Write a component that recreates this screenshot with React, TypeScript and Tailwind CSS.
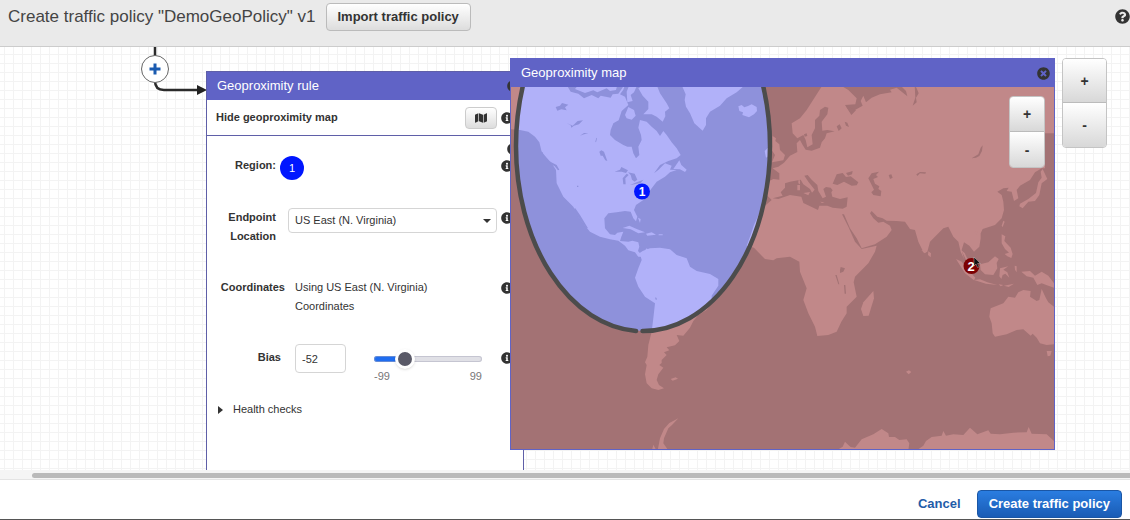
import { useState } from 'react'
import type { ReactNode } from 'react'
import { FaInfoCircle, FaMap, FaQuestionCircle, FaTimesCircle } from 'react-icons/fa'

const REGIONS = ['US East (N. Virginia)', 'US East (Ohio)', 'US West (Oregon)', 'Asia Pacific (Singapore)']

const AMERICAS = [
  // mainland north america
  'M-10 90H345L340 104 330 118 345 125 355 150 335 168 326 196 310 205 302 225 300 240 315 255 340 270 352 275 365 275 370 295 378 310 388 300 385 275 395 255 393 240 385 218 390 195 410 200 425 215 440 228 450 243 460 228 470 240 485 262 500 280 512 300 500 310 475 318 450 330 432 355 445 345 465 325 485 332 480 344 500 345 480 352 465 365 440 380 425 400 400 435 378 450 372 465 382 485 378 499 370 490 362 470 345 468 320 472 295 475 283 490 285 520 300 538 315 540 322 533 340 530 334 545 330 558 355 560 367 557 385 562 388 575 384 588 395 600 410 580 440 605 385 605 375 592 355 586 345 572 325 557 300 553 270 545 240 530 225 512 205 485 190 455 175 440 160 425 150 405 140 385 138 345 125 325 110 308 95 290 88 262 75 245 55 230 30 225 -10 222Z',
  // baffin and hudson islands
  'M385 100L400 90H440L450 115 470 145 478 160 465 170 466 184 458 200 440 185 425 178 400 178 415 162 415 140 398 122Z',
  'M345 180L355 156 372 165 377 182 365 194 350 190Z',
  'M358 90H382L372 112 362 120 368 138 352 142 350 110Z',
  // newfoundland, cuba, hispaniola
  'M490 342L508 316 514 330 530 344 525 351 510 343Z',
  'M338 519L358 512 380 522 405 532 385 535 362 523Z',
  'M408 536L425 532 438 539 412 542Z M446 538h12v3h-12Z M384 488l8 4-2 12Z',
  // greenland, iceland, ireland
  'M515 90L527 118 524 135 528 155 540 175 553 205 568 218 578 227 588 210 588 190 600 170 630 152 650 130 680 112 705 90Z',
  'M685 154L695 150 703 157 714 153 725 148 740 156 741 168 732 178 717 187 697 180 699 172 688 168Z',
  'M764 288L776 276 784 298 768 308Z',
  // south america
  'M380 600L398 588 420 580 450 578 480 583 500 600 530 610 540 635 560 648 600 657 625 672 625 692 605 722 605 742 590 765 565 780 550 798 540 818 520 842 500 840 508 858 495 871 470 877 478 886 462 892 470 900 455 915 455 924 448 930 460 938 445 958 440 975 447 990 462 1000 445 1005 425 1000 410 985 405 958 410 930 405 922 412 905 415 870 425 830 430 790 435 745 405 725 385 695 375 668 385 640 395 615 392 604Z',
  'M482 972L497 967 504 971 488 977Z',
  'M505 1090L478 1104 462 1122 450 1150 443 1186H475L460 1165 462 1150 475 1120 486 1110Z M426 1186l4-17 9 17Z',
]

// narrow inlets on the pacific coast
const PACIFIC_INLETS = 'M190 462l6-2 14 20 24 40-6-2-24-32Z M112 316l28 14 8 14-4 2-10-12-22-12Z M90 288l8 4 2 12-8-4Z'

const EASTERN = [
  // eurasia and africa, inland seas are painted on top
  'M98 340L115 335 132 323 150 302 172 291 170 265 180 255 188 270 197 284 215 287 240 278 245 262 255 250 260 235 284 229 262 225 247 227 245 200 262 178 265 158 255 155 240 165 238 182 225 195 225 220 215 240 218 268 202 277 197 255 190 240 172 250 158 235 155 205 180 190 200 165 235 110 248 90H300L325 105 350 130 346 148 315 150 325 165 335 178 345 165 368 152 362 138 370 122 378 142 395 128 420 118 455 112 450 104 470 98 502 124 498 108 480 90H942V235H915V340H905L885 352 870 375 840 392 830 405 835 430 822 438 815 410 800 408 806 398 790 400 772 410 785 420 790 440 792 465 785 490 765 510 735 520 728 522 722 535 722 550 718 575 702 590 688 572 672 562 665 585 672 612 662 590 655 560 640 545 625 515 610 520 590 540 570 560 562 590 552 595 535 560 525 525 510 522 495 500 470 498 440 497 428 490 412 485 395 468 390 475 400 490 415 503 430 500 450 512 455 525 440 545 405 568 365 580 350 550 330 520 312 478 306 478 325 515 345 560 365 582 410 572 405 590 385 625 345 665 341 682 350 725 320 755 320 775 304 800 290 830 265 840 232 843 225 815 205 775 190 735 200 700 180 650 178 620 150 605 110 610 100 616 75 612 55 592 42 578 20 572 32 540 42 510 60 470 75 452 95 435 80 420 88 378 100 372 118 374 118 355Z',
  // britain, madagascar, sri lanka
  'M98 243L108 250 106 258 118 268 120 285 135 300 130 316 96 322 105 300 95 285Z',
  'M400 708L402 730 386 782 370 783 363 762 370 742Z',
  'M565 589L573 595 572 607 564 600Z M544 585l12 2 2 6-8-2Z',
  // indonesia and the philippines
  'M648 612L665 620 690 650 706 668 702 676 675 655Z M664 586l10 8 12 26-9-8Z',
  'M702 675L720 673 742 682 772 690 738 686Z M776 688l14 2-8 4Z M792 692l30-6-16 10Z',
  'M720 628L745 622 765 604 776 612 770 624 772 640 760 660 735 658 722 645Z',
  'M780 640L805 634 790 644 802 652 808 668 796 656 788 660 784 672 778 664Z',
  'M785 538L796 544 793 558 812 578 818 598 808 594 795 582 785 565Z M794 597l12-4 8-8 4 12-4 12-12-5Z',
  'M785 512L790 497 794 500 788 516Z M702 532l10-4-2 10Z M824 632l6 2 0 18-5-8Z',
  'M844 650L870 648 885 662 905 650 925 662 942 685V698L925 692 905 685 892 690 880 668 860 664Z',
  // japan
  'M908 342L922 372 905 385 898 420 885 438 865 440 848 460 838 454 840 446 865 432 888 414 895 382 905 368 902 350Z',
  // australia and tasmania
  'M750 770L752 760 790 745 805 725 825 728 835 712 850 705 872 708 870 725 890 738 898 735 905 702 918 730 925 742 942 755V868L920 870 900 865 890 848 878 836 872 842 850 823 830 825 800 838 765 845 758 835 755 805 748 785Z',
  'M920 888H935L931 902 923 904Z M498 950l9-4 7 5-8 7Z',
  // antarctica
  'M290 1186L308 1175 315 1160 325 1170 332 1176 345 1178 365 1153 400 1138 425 1122 445 1135 447 1146 465 1146 478 1155 500 1153 508 1165 505 1186Z',
  'M530 1186L550 1172 558 1158 575 1146 605 1142 610 1128 618 1142 640 1138 670 1140 690 1118 712 1138 745 1126 752 1136 780 1138 820 1133 860 1132 866 1116 875 1136 920 1138 942 1158V1186Z',
]

const AMERICAN_LAKES =
  'M170 90L182 110 205 116 222 130 245 120 265 130 272 122 302 128 308 118 325 116 343 90H322L318 105 300 108 290 100 262 112 250 106 225 114 195 102 205 90Z M137 156L150 152 156 144 175 149 165 157 170 166 154 163 142 167Z M170 204L188 212 203 198 219 196 207 208 192 212 184 218 182 211Z M210 242L222 234 235 235 222 238Z M256 260l3-12 2 2-3 12Z M268 290l6-4 8 4 10 28-6-2-8-14-6 0Z M314 350L330 344 334 336 354 346 348 354 335 350Z M340 388L338 370 350 356 356 360 346 370 347 388Z M354 352L374 356 382 374 374 380 366 374 362 360Z M360 390L380 382 400 374 392 384 374 388Z M201 392h4v4h-4Z M436 727l4 2v6l-4-2Z'

const INLAND_SEAS =
  // mediterranean
  'M98 430L128 422 122 412 135 398 135 385 150 380 182 374 190 388 210 402 216 413 224 404 205 380 193 362 203 360 215 374 232 390 235 408 248 430 258 425 250 402 258 396 272 398 278 406 274 412 277 425 300 432 323 427 320 455 308 461 278 458 262 452 238 452 234 465 190 444 184 425 150 420 115 432Z ' +
  // black sea, caspian and the larger lakes
  'M278 386L290 358 308 354 318 366 332 364 355 382 350 391 335 392 312 380 292 390Z M318 354l20-6-2 10-12 4Z M385 370L395 355 417 350 408 360 414 366 400 372 405 386 418 394 415 402 424 408 422 424 400 420 394 412 402 404Z M446 360l8-2 4 10-8 4Z M529 358L540 351 558 352 556 356 540 355 532 363Z M695 310L715 298 722 278 728 271 726 288 718 303 708 308Z M524 90L530 100 536 115 528 128 530 142 518 152 526 128Z M290 214L299 208 305 220 296 228Z M314 200L322 203 327 216 318 212Z M318 154l30 12-14 14Z M300 645L302 636 315 640 310 650 300 654Z M286 660l4 0 8 28-3 0Z M312 690l4 0 2 26-4 0Z M192 238l8-3 2 8-8 2Z'

const CORSICA_SARDINIA = 'M175 376l5 0 0 12-5-3Z M172 390h8v16h-8Z M190 414L210 411 205 421Z M240 440l14 2-8 2Z'

interface WorldProps {
  land: string
  sea: string
}

function World({ land, sea }: WorldProps) {
  return (
    <>
      <rect x="510" y="86" width="546" height="365" fill={sea} />
      <g transform="translate(510 55) scale(.33333)">
        {AMERICAS.map((d) => (
          <path key={d} d={d} fill={land} />
        ))}
        <path d={AMERICAN_LAKES} fill={sea} />
        <path d={PACIFIC_INLETS} fill={sea} />
      </g>
      <g transform="translate(740 55) scale(.33333)">
        {EASTERN.map((d) => (
          <path key={d} d={d} fill={land} />
        ))}
        <path d={INLAND_SEAS} fill={sea} />
        <path d={CORSICA_SARDINIA} fill={land} />
      </g>
    </>
  )
}

function GeoMap() {
  return (
    <svg viewBox="511 87 543 362" className="block w-full" role="img" aria-label="World map">
      <defs>
        <clipPath id="coverage">
          <ellipse cx="643" cy="146" rx="127" ry="185" />
        </clipPath>
      </defs>
      <World land="#c18889" sea="#a37274" />
      <g clipPath="url(#coverage)">
        <World land="#b1b1f9" sea="#8e91db" />
      </g>
      <path
        d="M636 331A127 185 0 0 1 516 146A127 185 0 0 1 643 -39A127 185 0 0 1 770 146A127 185 0 0 1 642.500 331"
        fill="none"
        stroke="#4c4c4c"
        strokeWidth="4.500"
        strokeLinecap="round"
      />
      <circle cx="642" cy="191.500" r="8" fill="#0016ff" />
      <text x="642" y="196" textAnchor="middle" fill="#fff" fontSize="12" fontWeight="700">
        1
      </text>
      <circle cx="971.500" cy="266" r="8" fill="#7d0003" />
      <text x="971" y="271" textAnchor="middle" fill="#fff" fontSize="13" fontWeight="700">
        2
      </text>
      <path d="M974 257v9l2-2 1.600 3.500 1.600-.8-1.600-3.200h2.800Z" fill="#111" stroke="#ddd" strokeWidth=".4" />
    </svg>
  )
}

function Info({ label }: { label: string }) {
  return (
    <button type="button" aria-label={label} className="block text-[#333]">
      <FaInfoCircle size={12} />
    </button>
  )
}

function ZoomButtons({ className, size }: { className: string; size: string }) {
  const button = `${size} block w-full bg-linear-to-b from-white to-[#d8d8d8] font-bold leading-none text-[#333]`
  return (
    <div className={`absolute overflow-hidden rounded-sm border border-[#c4c4c4] text-sm ${className}`}>
      <button type="button" aria-label="Zoom in" className={`${button} border-b border-[#bbb]`}>
        +
      </button>
      <button type="button" aria-label="Zoom out" className={button}>
        -
      </button>
    </div>
  )
}

function Row({ children, className }: { children: ReactNode; className: string }) {
  return <div className={`flex items-start ${className}`}>{children}</div>
}

function RulePanel() {
  const [region, setRegion] = useState(REGIONS[0])
  const [bias, setBias] = useState(-52)
  const filled = ((bias + 99) / 198) * 100

  return (
    <section className="absolute top-6 bottom-0 left-[206px] w-[318px] border border-b-0 border-[#5f5fa8] bg-white">
      <header className="flex h-7 items-center justify-between bg-[#6063c6] pr-1 pl-2.5">
        <h2 className="text-[13px] text-white">Geoproximity rule</h2>
        <button type="button" aria-label="Remove rule" className="text-[#333]">
          <FaTimesCircle size={12} />
        </button>
      </header>
      <div className="flex h-9 items-center border-b border-[#5f5fa8] pr-2.5 pl-[9px]">
        <span className="flex-1 font-bold">Hide geoproximity map</span>
        <button
          type="button"
          aria-label="Hide geoproximity map"
          className="mr-1 flex h-[22px] w-8 items-center justify-center rounded-sm border border-[#ccc] bg-linear-to-b from-white to-[#ddd] text-[#333]"
        >
          <FaMap size={12} />
        </button>
        <Info label="About the map" />
      </div>

      <div className="flex flex-col pt-5 pr-2.5 pl-px leading-[19px]">
        <Row className="mb-7 h-6">
          <span className="w-[68px] text-right font-bold">Region:</span>
          <span className="ml-1 flex size-6 items-center justify-center rounded-full bg-[#0016ff] text-white">
            1
          </span>
          <span className="ml-auto pt-1">
            <Info label="About regions" />
          </span>
        </Row>
        <Row className="mb-8">
          <label htmlFor="endpoint" className="w-[68px] text-right font-bold">
            Endpoint Location
          </label>
          <div className="relative ml-3 flex-1">
            <select
              id="endpoint"
              value={region}
              onChange={(e) => setRegion(e.target.value)}
              className="block h-[25px] w-full appearance-none rounded-sm border border-[#d5d5d5] bg-white pl-1.5"
            >
              {REGIONS.map((r) => (
                <option key={r}>{r}</option>
              ))}
            </select>
            <span className="pointer-events-none absolute top-[11px] right-1.5 border-x-4 border-t-4 border-x-transparent border-t-[#333]" />
          </div>
          <span className="ml-1 pt-1">
            <Info label="About endpoint location" />
          </span>
        </Row>
        <Row className="mb-7">
          <span className="w-[77px] text-right font-bold">Coordinates</span>
          <span className="ml-2.5 w-36">Using US East (N. Virginia) Coordinates</span>
          <span className="ml-auto pt-1">
            <Info label="About coordinates" />
          </span>
        </Row>
        <Row className="mb-4">
          <label htmlFor="bias" className="w-[77px] pt-1 pr-1 text-right font-bold">
            Bias
          </label>
          <input
            id="bias"
            type="text"
            value={bias}
            onChange={(e) => setBias(Number(e.target.value) || 0)}
            className="ml-2.5 h-[29px] w-[51px] rounded-sm border border-[#d5d5d5] pl-1.5"
          />
          <div className="mt-1 ml-7 w-[108px] text-[#777]">
            <input
              type="range"
              min={-99}
              max={99}
              value={bias}
              aria-label="Bias"
              onChange={(e) => setBias(Number(e.target.value))}
              style={{ background: `linear-gradient(to right, #1f6df0 ${filled}%, #e0e0e6 ${filled}%)` }}
              className="mt-2 mb-1.5 block h-1.5 w-full appearance-none rounded-full inset-ring inset-ring-[#aab]/50 [&::-webkit-slider-thumb]:size-5 [&::-webkit-slider-thumb]:appearance-none [&::-webkit-slider-thumb]:rounded-full [&::-webkit-slider-thumb]:border-3 [&::-webkit-slider-thumb]:border-white [&::-webkit-slider-thumb]:bg-[#5a5a68] [&::-webkit-slider-thumb]:shadow"
            />
            <div className="flex justify-between leading-4">
              <span>-99</span>
              <span>99</span>
            </div>
          </div>
          <span className="ml-auto pt-2">
            <Info label="About bias" />
          </span>
        </Row>
        <details className="pl-2.5">
          <summary className="flex cursor-pointer items-center gap-2.5">
            <span className="border-y-4 border-l-[5px] border-y-transparent border-l-[#333]" />
            Health checks
          </summary>
        </details>
      </div>
    </section>
  )
}

function MapPanel() {
  return (
    <section className="absolute top-[11px] left-[510px] w-[545px] border border-[#6063c6] bg-[#6063c6]">
      <header className="flex h-7 items-center justify-between pr-1 pl-2.5">
        <h2 className="text-[13px] text-white">Geoproximity map</h2>
        <button type="button" aria-label="Close map" className="text-[#333]">
          <FaTimesCircle size={13} />
        </button>
      </header>
      <GeoMap />
      <ZoomButtons className="top-[37px] right-[9px] w-9" size="h-[35px]" />
    </section>
  )
}

export default function App() {
  return (
    <div className="flex min-h-screen flex-col bg-white font-['Liberation_Sans',Arial,sans-serif] text-[11px] text-[#333]">
      <header className="flex h-[47px] items-start border-b border-[#ccc] bg-[#eaeaea] pt-[3px] pl-2">
        <h1 className="pt-0.5 text-[17px] leading-6 text-[#444]">Create traffic policy "DemoGeoPolicy" v1</h1>
        <button
          type="button"
          className="ml-2.5 h-7 rounded-sm border border-[#bbb] bg-linear-to-b from-white to-[#ddd] px-[11px] text-[13px] font-bold"
        >
          Import traffic policy
        </button>
        <button type="button" aria-label="Help" className="mt-1.5 ml-auto">
          <FaQuestionCircle size={15} />
        </button>
      </header>

      <main className="relative flex-1 overflow-hidden bg-[linear-gradient(to_right,#f3f3f3_1px,transparent_1px),linear-gradient(to_bottom,#f3f3f3_1px,transparent_1px)] bg-size-[9px_9px] bg-position-[4px_7px]">
        <svg width="70" height="52" className="absolute top-0 left-[138px]" aria-hidden="true">
          <path d="M17 0v34q0 9 9 9h35" fill="none" stroke="#2b2b2b" strokeWidth="2.500" />
          <path d="M59 38l10 5-10 5Z" fill="#222" />
        </svg>
        <button
          type="button"
          aria-label="Connect to"
          className="absolute top-2 left-[141px] flex size-7 items-center justify-center rounded-full border border-[#666] bg-white text-[#1a5bb0]"
        >
          <svg width="12" height="12" viewBox="0 0 12 12" aria-hidden="true">
            <path d="M6 .5v11M.5 6h11" stroke="currentColor" strokeWidth="3" />
          </svg>
        </button>
        <RulePanel />
        <button type="button" aria-label="Remove region" className="absolute top-[96px] left-[507px]">
          <FaTimesCircle size={12} />
        </button>
        <MapPanel />
        <ZoomButtons className="top-[11px] right-[23px] w-[45px]" size="h-11" />
      </main>

      <div className="h-2.5 border-b border-[#e4e4e4] bg-[#f5f5f5] pt-[3px] pl-8">
        <div className="h-[5px] rounded-l-full bg-[#bababa]" />
      </div>
      <footer className="flex h-10 items-center justify-end border-b border-[#555] pt-2 pr-2 text-[13px] font-bold">
        <a href="#cancel" className="mr-4 text-[#1f5ca8]">
          Cancel
        </a>
        <button
          type="button"
          className="h-7 rounded-sm border border-[#1a56a5] bg-linear-to-b from-[#2a7de1] to-[#1a5cb5] px-[11px] text-white"
        >
          Create traffic policy
        </button>
      </footer>
    </div>
  )
}
